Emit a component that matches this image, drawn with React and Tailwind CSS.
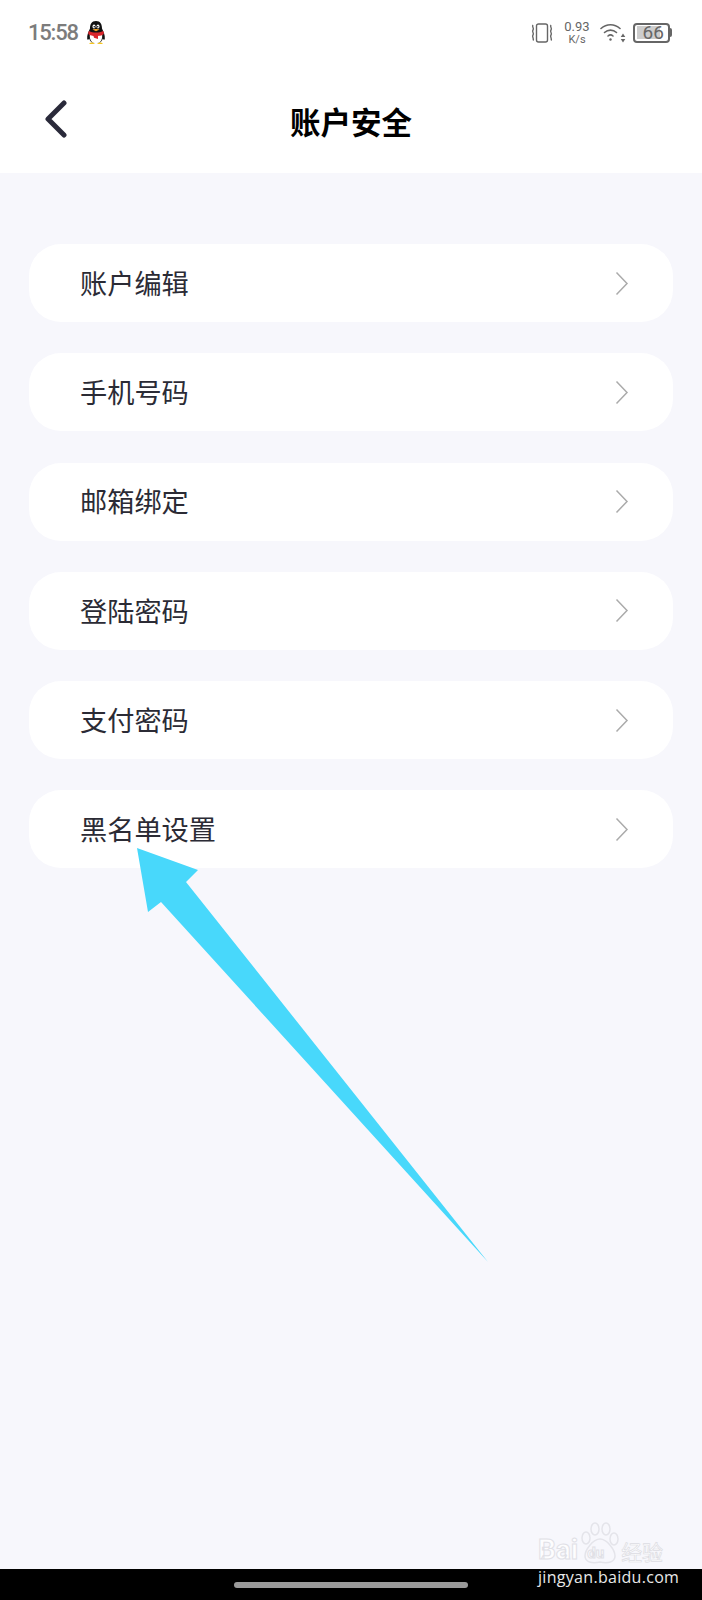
const items = ['账户编辑', '手机号码', '邮箱绑定', '登陆密码', '支付密码', '黑名单设置'];

const Penguin = () => (
  <svg width="20" height="25" viewBox="0 0 20 25" className="ml-[8px]">
    <path d="M10 1C5.500 1 4 4.500 4 8.500C2.500 12 .8 15 1.200 19C1.600 20.500 2.800 19.500 3.200 18.500C3.800 20.500 5 22 6 22.600H14C15 22 16.200 20.500 16.800 18.500C17.200 19.500 18.400 20.500 18.800 19C19.200 15 17.500 12 16 8.500C16 4.500 14.500 1 10 1Z" fill="#111" />
    <path d="M3.800 14.500C3.500 21.500 6.500 23 10 23C13.500 23 16.500 21.500 16.200 14.500Z" fill="#fff" />
    <ellipse cx="8" cy="6.500" rx="1.500" ry="2" fill="#fff" />
    <ellipse cx="12" cy="6.500" rx="1.500" ry="2" fill="#fff" />
    <circle cx="8.300" cy="6.800" r=".8" fill="#111" />
    <circle cx="11.700" cy="6.800" r=".8" fill="#111" />
    <path d="M6.500 9.500C8 8.700 12 8.700 13.500 9.500L10 11.300Z" fill="#f5a623" />
    <path d="M3 11C7 13 13 13 17 11C18.500 12 18 14.500 16.500 15C14.500 15.700 13 15.800 12 16V19L8 17.800L7.500 16C6 15.700 5 15.500 3.500 15C2 14.500 1.800 12 3 11Z" fill="#d9262c" />
    <path d="M3.500 23C5 22 8 22.300 9 24H3.500ZM11 24C12 22.300 15 22 16.500 23V24Z" fill="#f5c623" />
  </svg>
);

const Vibrate = () => (
  <svg width="24" height="20" viewBox="0 0 24 20" fill="none" stroke="#666" strokeWidth="1.400">
    <rect x="6.500" y="1" width="11" height="18" rx="2" />
    <path d="M3 2C1.500 4 4.500 5 3 7C1.500 9 4.500 10 3 12C1.500 14 4.500 15.500 3 17.500" />
    <path d="M21 2C19.500 4 22.500 5 21 7C19.500 9 22.500 10 21 12C19.500 14 22.500 15.500 21 17.500" />
  </svg>
);

const Wifi = () => (
  <svg width="26" height="20" viewBox="0 0 26 20" fill="none" stroke="#666" strokeWidth="1.600" strokeLinecap="round">
    <path d="M1 5.500C6.500 .5 14.500 .5 20 5.500" />
    <path d="M4.500 9.500C8 6.300 13 6.300 16.500 9.500" />
    <path d="M8 13C9.500 11.700 11.500 11.700 13 13" />
    <circle cx="10.500" cy="16.500" r="1.200" fill="#666" stroke="none" />
    <path d="M23 10.500L25.300 14H20.700Z M23 19.500L25.300 16H20.700Z" fill="#666" stroke="none" />
  </svg>
);

const Battery = () => (
  <div className="ml-[7px] flex items-center">
    <div className="flex h-[20px] w-[37px] items-center rounded-[4px] border-[2px] border-[#666] p-[1.500px]">
      <div className="flex h-full w-[23px] items-center bg-[#cdcdcd]">
        <span className="ml-[6px] text-[19px] leading-none text-[#666]">66</span>
      </div>
    </div>
    <div className="h-[9px] w-[2px] rounded-r-sm bg-[#666]" />
  </div>
);

const StatusBar = () => (
  <div className="flex h-[64px] items-center justify-between pl-[28px] pr-[30px] pt-[1px]">
    <div className="flex items-center">
      <span className="text-[22px] font-medium leading-none tracking-[-1.200px] text-[#7c7c7c]">15:58</span>
      <Penguin />
    </div>
    <div className="flex items-center">
      <Vibrate />
      <div className="ml-[10px] flex w-[26px] flex-col items-center text-[#666]">
        <span className="text-[13px] leading-[14px]">0.93</span>
        <span className="text-[11px] leading-[11px]">K/s</span>
      </div>
      <div className="ml-[10px] flex items-center"><Wifi /></div>
      <Battery />
    </div>
  </div>
);

const Chevron = () => (
  <svg width="14" height="25" viewBox="0 0 14 25" fill="none" stroke="#ababab" strokeWidth="1.500">
    <path d="M1.500 1.500L12 12.500L1.500 23.500" />
  </svg>
);

const Row = ({ label }) => (
  <div className="flex h-[78px] items-center justify-between rounded-[32px] bg-white pl-[51px] pr-[44px]">
    <span className="pt-[5px] text-[27.200px] leading-none text-[#2b2b35]">{label}</span>
    <Chevron />
  </div>
);

function App() {
  return (
    <div
      className="relative flex h-[1600px] w-[702px] flex-col overflow-hidden bg-[#f7f7fc]"
      style={{ fontFamily: 'Roboto, "Noto Sans CJK SC", sans-serif' }}
    >
      <header className="h-[173px] bg-white">
        <StatusBar />
        <div className="relative flex h-[109px] items-center justify-center pt-[11px]">
          <svg width="24" height="38" viewBox="0 0 24 38" fill="none" className="absolute left-[44px] top-[36px]">
            <path d="M20 3L4 19L20 35" stroke="#2a2a3a" strokeWidth="5" strokeLinecap="round" strokeLinejoin="round" />
          </svg>
          <h1 className="text-[30.500px] font-bold leading-none text-black">账户安全</h1>
        </div>
      </header>

      <main className="flex flex-1 flex-col gap-[31.300px] px-[29px] pt-[71px]">
        {items.map((item) => (
          <Row key={item} label={item} />
        ))}
      </main>

      <footer className="flex h-[31px] items-start justify-center bg-black pt-[13px]">
        <div className="h-[6px] w-[234px] rounded-full bg-[#9a9a9a]" />
      </footer>

      {/* annotation arrow over the list */}
      <svg width="702" height="1600" viewBox="0 0 702 1600" className="pointer-events-none absolute left-0 top-0">
        <path d="M137 848L198 870L186 882L488 1262L161 902L148 912Z" fill="#48d8fb" />
      </svg>

      {/* watermark */}
      <div className="pointer-events-none absolute left-[538px] top-[1522px] w-[130px]">
        <svg width="40" height="44" viewBox="0 0 40 44" fill="none" stroke="#e4e4ea" strokeWidth="1.500" className="absolute left-[42px] top-0">
          <ellipse cx="6" cy="16" rx="4" ry="6" />
          <ellipse cx="15" cy="7" rx="4" ry="6" />
          <ellipse cx="26" cy="7" rx="4" ry="6" />
          <ellipse cx="34" cy="17" rx="4" ry="6" />
          <path d="M20 17C13 17 5 28 5 34C5 40 12 42 20 40C28 42 35 40 35 34C35 28 27 17 20 17Z" />
        </svg>
        <div className="flex h-[42px] items-end">
          <span className="text-[28px] font-bold leading-none text-white/80 [-webkit-text-stroke:1px_#e0e0e6]">Bai</span>
          <span className="ml-[9px] pb-[3px] text-[15px] font-bold leading-none text-white/80 [-webkit-text-stroke:1px_#e0e0e6]">du</span>
          <span className="ml-[17px] text-[21px] leading-none text-white/80 [-webkit-text-stroke:.7px_#dcdce2]">经验</span>
        </div>
        <div className="mt-[4px] whitespace-nowrap text-[16px] leading-[18px] tracking-[.3px] text-[#e8e8e8]" style={{ fontFamily: '"Open Sans", sans-serif' }}>jingyan.baidu.com</div>
      </div>
    </div>
  );
}

export default App;
